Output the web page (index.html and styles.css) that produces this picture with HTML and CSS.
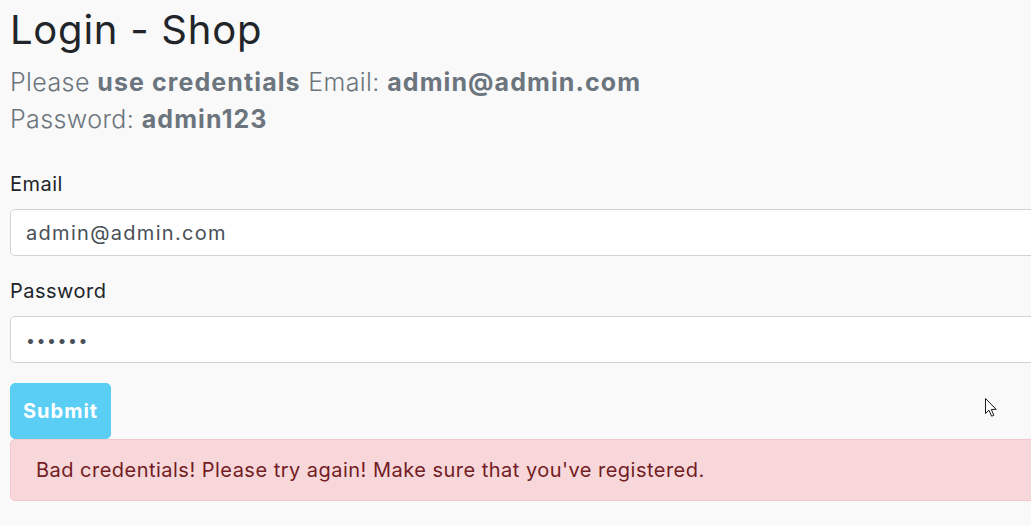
FILE: index.html
```
<!DOCTYPE html>
<html lang="en">
<head>
<meta charset="utf-8">
<title>Login - Shop</title>
<link rel="stylesheet" href="styles.css">
</head>
<body>
<main class="page">
  <h1 class="title">Login - Shop</h1>
  <p class="lead">Please <b>use credentials</b> Email: <b>admin@admin.com</b><br>Password: <b>admin123</b></p>
  <form class="form">
    <div class="group">
      <label class="label" for="email">Email</label>
      <input class="control" id="email" type="text" value="admin@admin.com">
    </div>
    <div class="group">
      <label class="label" for="password">Password</label>
      <input class="control pass" id="password" type="password" value="123456">
    </div>
    <button class="btn" type="button">Submit</button>
    <div class="alert">Bad credentials! Please try again! Make sure that you've registered.</div>
  </form>
  <svg class="cursor" width="14" height="21" viewBox="0 0 14 21" aria-hidden="true">
    <path d="M1.5 1.5 L1.5 16.5 L5 13.2 L7.6 19.2 L9.8 18.3 L7.3 12.4 L12.2 12.4 Z" fill="#fff" stroke="#1a1a1a" stroke-width="1" stroke-linejoin="miter"/>
  </svg>
</main>
</body>
</html>
```
FILE: styles.css
```
html, body {
  margin: 0;
  padding: 0;
  overflow: hidden;
  background: #f9f9f9;
}
body {
  font-family: "Inter", "Open Sans", sans-serif;
  color: #212529;
}
.page {
  position: relative;
  width: 1100px;
  padding: 6px 0 0 10px;
  box-sizing: border-box;
}
.title {
  margin: 0 0 10px;
  font-size: 40px;
  font-weight: 400;
  line-height: 1.2;
  letter-spacing: 0.75px;
  color: #212529;
}
.lead {
  margin: 0 0 31px;
  font-size: 25px;
  font-weight: 300;
  line-height: 37px;
  letter-spacing: 0.4px;
  color: #6c757d;
}
.lead b {
  font-weight: 700;
  letter-spacing: 1.1px;
}
.form {
  display: flex;
  flex-direction: column;
  align-items: flex-start;
}
.group {
  width: 100%;
  display: flex;
  flex-direction: column;
  margin-bottom: 20px;
}
.label {
  font-size: 20px;
  line-height: 30px;
  letter-spacing: 0.5px;
  margin-bottom: 10px;
  color: #212529;
}
.control {
  box-sizing: border-box;
  width: 100%;
  height: 47px;
  padding: 7px 15px;
  font: inherit;
  font-size: 20px;
  line-height: 30px;
  letter-spacing: 1.3px;
  color: #495057;
  background: #fff;
  border: 1px solid #ced4da;
  border-radius: 5px;
  outline: none;
}
.pass {
  font-size: 16px;
  letter-spacing: 1.5px;
}
.btn {
  box-sizing: border-box;
  height: 56px;
  padding: 0 12px;
  font: inherit;
  font-size: 20px;
  font-weight: 700;
  letter-spacing: 1px;
  color: #fff;
  background: #5bcef5;
  border: 1px solid #5bcef5;
  border-radius: 5px;
}
.alert {
  box-sizing: border-box;
  width: 100%;
  padding: 15px 25px;
  font-size: 20px;
  line-height: 30px;
  letter-spacing: 0.48px;
  color: #721c24;
  background: #f8d7da;
  border: 1px solid #f5c6cb;
  border-radius: 5px;
}
.cursor {
  position: absolute;
  left: 984px;
  top: 397px;
}
```
